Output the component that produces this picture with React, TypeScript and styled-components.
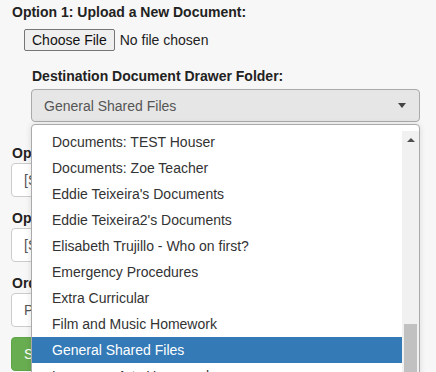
import styled, { createGlobalStyle } from "styled-components";

const GlobalStyle = createGlobalStyle`
  html, body {
    margin: 0;
    padding: 0;
    overflow: hidden;
    background: #f7f7f7;
    font-family: "Liberation Sans", Arial, sans-serif;
  }
`;

const Page = styled.div`
  position: relative;
  box-sizing: border-box;
  display: flex;
  flex-direction: column;
  padding: 2px 16px 0 11px;
  height: 372px;
  overflow: hidden;
  color: #222;
`;

const Heading = styled.div`
  font-size: 14px;
  font-weight: bold;
  line-height: 20px;
  padding-left: 1px;
  color: #222;
`;

const FileRow = styled.div`
  display: flex;
  align-items: center;
  gap: 5px;
  margin: 7px 0 0 13px;
  font-size: 14px;
`;

const FileButton = styled.div`
  box-sizing: border-box;
  height: 22px;
  padding: 0 7px;
  display: flex;
  align-items: center;
  border: 1px solid #767676;
  border-radius: 2px;
  background: #efefef;
  color: #111;
`;

const FileStatus = styled.span`
  color: #222;
`;

const Nested = styled.div`
  display: flex;
  flex-direction: column;
  padding-left: 20px;
  margin-top: 15px;
`;

const SelectWrap = styled.div`
  position: relative;
  margin-top: 3px;
  z-index: 5;
`;

const SelectBox = styled.div`
  box-sizing: border-box;
  height: 33px;
  display: flex;
  align-items: center;
  justify-content: space-between;
  padding: 0 13px 0 12px;
  border: 1px solid #aaa;
  border-radius: 4px;
  background: #e6e6e6;
  color: #555;
  font-size: 14px;
`;

const Caret = styled.span`
  width: 0;
  height: 0;
  border-style: solid;
  border-width: 5px 4px 0 4px;
  border-color: #444 transparent transparent transparent;
`;

const Dropdown = styled.div`
  position: absolute;
  top: calc(100% + 2px);
  left: 0;
  right: 0;
  height: 270px;
  display: flex;
  background: #fff;
  border: 1px solid #aaa;
  border-radius: 4px;
  box-shadow: 0 0 6px rgba(0, 0, 0, 0.12);
  overflow: hidden;
`;

const Results = styled.ul`
  flex: 1;
  list-style: none;
  margin: 0;
  padding: 4px 0 0;
`;

const Option = styled.li<{ $active?: boolean }>`
  height: 26px;
  display: flex;
  align-items: center;
  padding-left: 20px;
  font-size: 14px;
  color: ${(p) => (p.$active ? "#fff" : "#333")};
  background: ${(p) => (p.$active ? "#337ab7" : "transparent")};
`;

const ScrollTrack = styled.div`
  width: 17px;
  margin-top: 6px;
  display: flex;
  flex-direction: column;
  align-items: center;
  background: #f1f1f1;
`;

const ScrollArrow = styled.span`
  margin-top: 7px;
  width: 0;
  height: 0;
  border-style: solid;
  border-width: 0 4px 4px 4px;
  border-color: transparent transparent #505050 transparent;
`;

const ScrollThumb = styled.div`
  margin-top: 182px;
  width: 13px;
  flex: 1;
  background: #c1c1c1;
`;

const Field = styled.div<{ $first?: boolean }>`
  display: flex;
  flex-direction: column;
  margin-top: ${(p) => (p.$first ? "21px" : "11px")};
`;

const Control = styled.div`
  box-sizing: border-box;
  height: 34px;
  display: flex;
  align-items: center;
  padding-left: 12px;
  border: 1px solid #ccc;
  border-radius: 4px;
  background: #fff;
  color: #555;
  font-size: 14px;
`;

const SubmitButton = styled.div`
  box-sizing: border-box;
  flex-shrink: 0;
  margin-top: 10px;
  width: 70px;
  height: 34px;
  display: flex;
  align-items: center;
  padding-left: 12px;
  border: 1px solid #5ea547;
  border-radius: 4px;
  background: #69ad51;
  color: #fff;
  font-size: 14px;
`;

const folders = [
  "Documents: TEST Houser",
  "Documents: Zoe Teacher",
  "Eddie Teixeira's Documents",
  "Eddie Teixeira2's Documents",
  "Elisabeth Trujillo - Who on first?",
  "Emergency Procedures",
  "Extra Curricular",
  "Film and Music Homework",
  "General Shared Files",
  "Language Arts Homework",
];

const App = () => {
  const selected = "General Shared Files";
  return (
    <>
      <GlobalStyle />
      <Page>
        <Heading>Option 1: Upload a New Document:</Heading>
        <FileRow>
          <FileButton>Choose File</FileButton>
          <FileStatus>No file chosen</FileStatus>
        </FileRow>
        <Nested>
          <Heading>Destination Document Drawer Folder:</Heading>
          <SelectWrap>
            <SelectBox>
              {selected}
              <Caret />
            </SelectBox>
            <Dropdown>
              <Results>
                {folders.map((name) => (
                  <Option key={name} $active={name === selected}>
                    {name}
                  </Option>
                ))}
              </Results>
              <ScrollTrack>
                <ScrollArrow />
                <ScrollThumb />
              </ScrollTrack>
            </Dropdown>
          </SelectWrap>
        </Nested>

        <Field $first>
          <Heading>Option 2: Link an Existing Document:</Heading>
          <Control>[Select a Document]</Control>
        </Field>
        <Field>
          <Heading>Option 3: Add a Web Link:</Heading>
          <Control>[Select a Link]</Control>
        </Field>
        <Field>
          <Heading>Order:</Heading>
          <Control>Place at Top</Control>
        </Field>
        <SubmitButton>Save</SubmitButton>
      </Page>
    </>
  );
};

export default App;
